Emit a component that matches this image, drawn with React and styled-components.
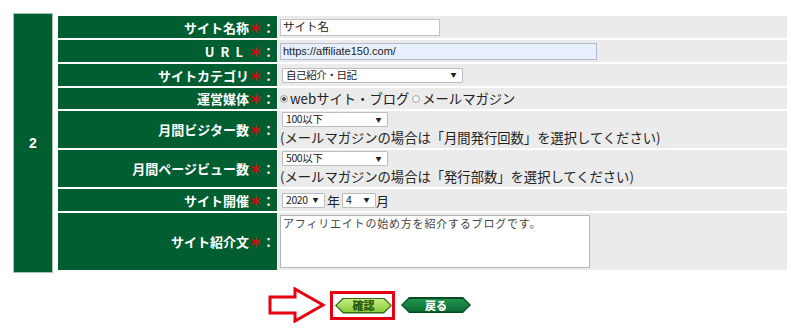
import styled, { createGlobalStyle } from 'styled-components';

const GlobalStyle = createGlobalStyle`
  body {
    margin: 0;
    background: #fff;
    font-family: "Noto Sans CJK JP", "Liberation Sans", sans-serif;
  }
`;

const Page = styled.div`
  padding: 13px 0 0 13px;
`;

const Outer = styled.div`
  display: flex;
  gap: 5px;
  align-items: flex-start;
`;

const NumCell = styled.div`
  width: 40px;
  height: 260px;
  box-sizing: border-box;
  border: 1px solid #a3c6ae;
  background: #005e30;
  color: #fff;
  font: bold 14px "Liberation Sans", sans-serif;
  display: flex;
  align-items: center;
  justify-content: center;
`;

const Form = styled.div`
  margin-top: 3px;
  display: grid;
  grid-template-columns: 219px 509px;
  grid-template-rows: 22px 22px 22px 21px 37px 37px 22px 57px;
  column-gap: 1px;
  row-gap: 2px;
`;

const Label = styled.div`
  background: #005e30;
  color: #fff;
  font-size: 13px;
  font-weight: bold;
  display: flex;
  align-items: center;
  justify-content: flex-end;
  padding-right: 2px;
  letter-spacing: ${(p) => (p.spaced ? '6px' : '0')};
  white-space: nowrap;
`;

const Req = styled.span`
  color: #e60012;
  letter-spacing: 0;
  font-weight: 900;
`;

const Colon = styled.span`
  letter-spacing: 0;
`;

const Value = styled.div`
  background: #ebebeb;
  padding-left: 2px;
  display: flex;
  flex-direction: ${(p) => (p.column ? 'column' : 'row')};
  align-items: ${(p) => (p.column ? 'flex-start' : 'center')};
  justify-content: ${(p) => (p.column ? 'center' : 'flex-start')};
  font-size: 13px;
  color: #222;
`;

const TextInput = styled.div`
  width: ${(p) => p.w}px;
  height: 17px;
  box-sizing: border-box;
  border: 1px solid ${(p) => (p.autofill ? '#b4bccb' : '#c3c3c3')};
  background: ${(p) => (p.autofill ? '#e8f0fe' : '#fff')};
  font-size: ${(p) => (p.latin ? '11px' : '11.5px')};
  font-family: ${(p) => (p.latin ? '"Liberation Sans", sans-serif' : 'inherit')};
  color: #222;
  padding: 0 2px;
  display: flex;
  align-items: center;
  line-height: 1;
`;

const Select = styled.div`
  width: ${(p) => p.w}px;
  height: 15px;
  box-sizing: border-box;
  margin-left: ${(p) => (p.flush ? '0' : '2px')};
  border: 1px solid #bdbdbd;
  border-radius: 1px;
  background: #fff;
  display: flex;
  align-items: center;
  justify-content: space-between;
  padding: 0 6px 0 3px;
  font-size: 10.5px;
  letter-spacing: -0.4px;
  color: #222;
  line-height: 1;
`;

const Caret = styled.span`
  font-size: 6px;
  color: #222;
`;

const Radio = styled.span`
  display: inline-block;
  width: 8px;
  height: 8px;
  box-sizing: border-box;
  border-radius: 50%;
  border: 1px solid #aaa;
  background: ${(p) => (p.checked ? 'radial-gradient(circle, #555 0 1.8px, #eee 2.2px)' : '#f4f4f4')};
  margin: 0 2px 0 0;
`;

const Choice = styled.label`
  display: inline-flex;
  align-items: center;
  margin-right: 3px;
  font-size: 13.3px;
`;

const Note = styled.div`
  font-size: 13.3px;
  line-height: 19px;
  margin-top: 1px;
`;

const Unit = styled.span`
  margin: 0 2px;
`;

const Textarea = styled.div`
  width: 310px;
  height: 53px;
  box-sizing: border-box;
  border: 1px solid #b5b5b5;
  background: #fff;
  font-size: 11px;
  letter-spacing: 0.8px;
  color: #444;
  padding: 1px 2px;
  line-height: 13px;
`;

const Actions = styled.div`
  display: flex;
  align-items: center;
  margin-top: 14px;
  padding-left: 255px;
`;

const Highlight = styled.div`
  border: 3px solid #e60012;
  padding: 4px 0 3px 2px;
  margin-left: 4px;
  display: flex;
`;

const Hex = styled.div`
  width: ${(p) => p.w}px;
  height: 16px;
  box-sizing: border-box;
  padding: 1.5px;
  background: ${(p) => p.edge};
  clip-path: polygon(8px 0, calc(100% - 8px) 0, 100% 50%, calc(100% - 8px) 100%, 8px 100%, 0 50%);
  margin-left: ${(p) => p.ml || 0}px;
`;

const HexFace = styled.div`
  height: 100%;
  background: ${(p) => p.fill};
  clip-path: polygon(7px 0, calc(100% - 7px) 0, 100% 50%, calc(100% - 7px) 100%, 7px 100%, 0 50%);
  color: ${(p) => p.ink};
  font-size: 11px;
  font-weight: 900;
  display: flex;
  align-items: center;
  justify-content: center;
  line-height: 1;
`;

function Req2() {
  return (
    <>
      <Req>＊</Req>
      <Colon>：</Colon>
    </>
  );
}

function Arrow() {
  return (
    <svg width="58" height="36" viewBox="0 0 58 36">
      <path
        d="M2 10 H27 V2 L55 18 L27 34 V26 H2 Z"
        fill="#fff"
        stroke="#e60012"
        strokeWidth="3"
        strokeLinejoin="miter"
      />
    </svg>
  );
}

export default function App() {
  return (
    <>
      <GlobalStyle />
      <Page>
        <Outer>
          <NumCell>2</NumCell>
          <Form>
            <Label>サイト名称<Req2 /></Label>
            <Value>
              <TextInput w={160}>サイト名</TextInput>
            </Value>

            <Label spaced>URL<Req2 /></Label>
            <Value>
              <TextInput w={317} autofill latin>https://affiliate150.com/</TextInput>
            </Value>

            <Label>サイトカテゴリ<Req2 /></Label>
            <Value>
              <Select w={181}>自己紹介・日記<Caret>▼</Caret></Select>
            </Value>

            <Label>運営媒体<Req2 /></Label>
            <Value>
              <Choice><Radio checked />webサイト・ブログ</Choice>
              <Choice><Radio />メールマガジン</Choice>
            </Value>

            <Label>月間ビジター数<Req2 /></Label>
            <Value column>
              <Select w={106}>100以下<Caret>▼</Caret></Select>
              <Note>(メールマガジンの場合は「月間発行回数」を選択してください)</Note>
            </Value>

            <Label>月間ページビュー数<Req2 /></Label>
            <Value column>
              <Select w={106}>500以下<Caret>▼</Caret></Select>
              <Note>(メールマガジンの場合は「発行部数」を選択してください)</Note>
            </Value>

            <Label>サイト開催<Req2 /></Label>
            <Value>
              <Select w={43}>2020<Caret>▼</Caret></Select>
              <Unit>年</Unit>
              <Select w={34} flush>4<Caret>▼</Caret></Select>
              <span>月</span>
            </Value>

            <Label>サイト紹介文<Req2 /></Label>
            <Value>
              <Textarea>アフィリエイトの始め方を紹介するブログです。</Textarea>
            </Value>
          </Form>
        </Outer>

        <Actions>
          <Arrow />
          <Highlight>
            <Hex w={57} edge="#2f6a1c">
              <HexFace fill="linear-gradient(#c4ec7d, #8ccb3c)" ink="#245d12">確認</HexFace>
            </Hex>
          </Highlight>
          <Hex w={70} ml={6} edge="#0a4a22">
            <HexFace fill="linear-gradient(#1f9550, #0b6b33)" ink="#fff">戻る</HexFace>
          </Hex>
        </Actions>
      </Page>
    </>
  );
}
